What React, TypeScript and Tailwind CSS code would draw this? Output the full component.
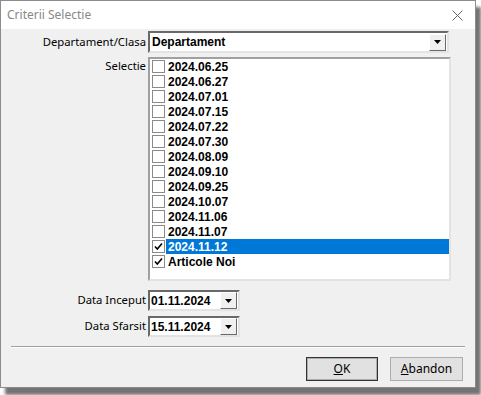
const items = [
  "2024.06.25",
  "2024.06.27",
  "2024.07.01",
  "2024.07.15",
  "2024.07.22",
  "2024.07.30",
  "2024.08.09",
  "2024.09.10",
  "2024.09.25",
  "2024.10.07",
  "2024.11.06",
  "2024.11.07",
  "2024.11.12",
  "Articole Noi",
];

const checked = ["2024.11.12", "Articole Noi"];

const DropButton = () => (
  <div className="flex h-[17px] w-[17px] items-center justify-center border border-t-white border-l-white border-r-[#696969] border-b-[#696969] bg-[#f0f0f0]">
    <svg width="7" height="4" viewBox="0 0 7 4">
      <path d="M0 0h7L3.5 4z" fill="#000" />
    </svg>
  </div>
);

const CheckBox = ({ on }: { on: boolean }) => (
  <div className="flex h-[13px] w-[13px] shrink-0 items-center justify-center border border-[#8a8a8a] bg-white">
    {on && (
      <svg width="9" height="9" viewBox="0 0 9 9">
        <path d="M1 4.5l2.3 2.5L8 1.5" stroke="#000" strokeWidth="1.6" fill="none" />
      </svg>
    )}
  </div>
);

const Label = ({ text }: { text: string }) => (
  <div className="text-right text-[11.3px] text-black">{text}</div>
);

const DateField = ({ value }: { value: string }) => (
  <div className="flex h-[21px] w-[92px] items-center justify-between border-2 border-t-[#696969] border-l-[#696969] border-r-[#e3e3e3] border-b-[#e3e3e3] bg-white pl-[1px] pr-[1px]">
    <span className="font-['Liberation_Sans',sans-serif] text-[12px] font-bold">{value}</span>
    <DropButton />
  </div>
);

export default function App() {
  return (
    <div className="h-[395px] w-[481px] overflow-hidden bg-white font-['Noto_Sans',sans-serif]">
      <div className="flex h-[388px] w-[476px] flex-col border border-[#8c8c8c] bg-[#f0f0f0] shadow-[5px_7px_3px_rgba(0,0,0,0.55)]">
        <div className="flex h-[28px] items-center justify-between bg-white pl-[6px] pr-[12px]">
          <span className="text-[12px] text-[#888]">Criterii Selectie</span>
          <svg width="11" height="11" viewBox="0 0 11 11">
            <path d="M0.5 0.5l10 10M10.5 0.5l-10 10" stroke="#666" strokeWidth="1" />
          </svg>
        </div>

        <div className="grid grid-cols-[145px_auto] items-center gap-x-[2px] pt-[2px]">
          <Label text="Departament/Clasa" />
          <div className="flex h-[22px] w-[301px] items-center justify-between border-2 border-t-[#696969] border-l-[#696969] border-r-[#e3e3e3] border-b-[#e3e3e3] bg-white pl-[2px] pr-[1px]">
            <span className="font-['Liberation_Sans',sans-serif] text-[12px] font-bold">Departament</span>
            <DropButton />
          </div>

          <div className="self-start pt-[5px]">
            <Label text="Selectie" />
          </div>
          <div className="mt-[4px] h-[224px] w-[303px] border-2 border-t-[#a0a0a0] border-l-[#a0a0a0] border-r-[#e3e3e3] border-b-[#e3e3e3] bg-white">
            {items.map((it) => {
              const sel = it === "2024.11.12";
              return (
                <div key={it} className="flex h-[15px] items-center pl-[2px]">
                  <CheckBox on={checked.includes(it)} />
                  <div
                    className={`ml-[1px] flex h-[15px] flex-1 items-center pl-[2px] font-['Liberation_Sans',sans-serif] text-[12px] font-bold ${
                      sel ? "bg-[#0078d7] text-white" : "text-black"
                    }`}
                  >
                    {it}
                  </div>
                </div>
              );
            })}
          </div>

          <div className="mt-[9px]">
            <Label text="Data Inceput" />
          </div>
          <div className="mt-[9px]">
            <DateField value="01.11.2024" />
          </div>
          <div className="mt-[5px]">
            <Label text="Data Sfarsit" />
          </div>
          <div className="mt-[5px]">
            <DateField value="15.11.2024" />
          </div>
        </div>

        <div className="mx-[10px] mt-[9px] h-[2px] border-t border-t-[#a0a0a0] border-b border-b-white" />

        <div className="mt-[9px] flex justify-end gap-[12px] pr-[12px]">
          <button className="h-[24px] w-[72px] border border-[#333] bg-[#e1e1e1] text-[12px] shadow-[inset_0_0_0_1px_#adadad]">
            <span className="underline">O</span>K
          </button>
          <button className="h-[24px] w-[73px] border border-[#adadad] bg-[#e1e1e1] text-[12px]">
            <span className="underline">A</span>bandon
          </button>
        </div>
      </div>
    </div>
  );
}
